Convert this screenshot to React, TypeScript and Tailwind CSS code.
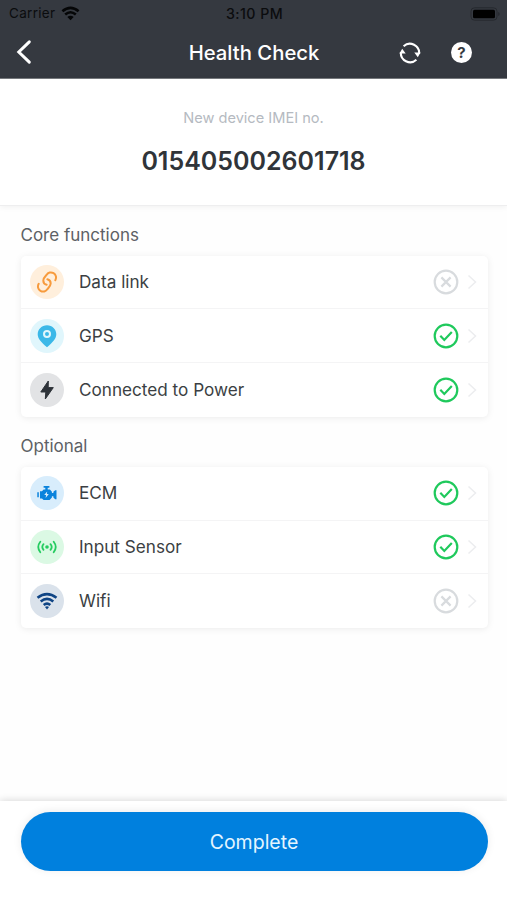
import { ReactNode } from "react";

type RowType = {
  label: string;
  icon: ReactNode;
  color: string;
  passed: boolean;
};

const LinkIcon = () => (
  <svg className="w-[22px] h-[22px]" viewBox="0 0 22 22" fill="none" stroke="#f79b3d" strokeWidth="2" strokeLinecap="round">
    <path d="M19.300 9.200A5 5 0 1 0 10.500 3.900C8.700 5.900 7.300 7.200 7.300 9.400 7.300 11.600 8.600 13.200 10.600 13.700" />
    <path d="M2.700 12.800A5 5 0 1 0 11.500 18.100C13.300 16.100 14.700 14.800 14.700 12.600 14.700 10.400 13.400 8.800 11.400 8.300" />
  </svg>
);

const PinIcon = () => (
  <svg className="w-[22px] h-[24px]" viewBox="0 0 22 24">
    <path
      fill="#3bb8e8"
      fillRule="evenodd"
      d="M11 1.200c5.300 0 9.300 4 9.300 9 0 4.300-3.500 7.900-9.300 13.100C5.200 18.100 1.700 14.500 1.700 10.200c0-5 4-9 9.300-9zM11 6.100a4 4 0 1 0 0 8 4 4 0 0 0 0-8zm0 2a2 2 0 1 1 0 4 2 2 0 0 1 0-4z"
    />
  </svg>
);

const BoltIcon = () => (
  <svg className="w-[16px] h-[20px]" viewBox="0 0 16 20">
    <path
      d="M9.300 1 1.800 12h5L6.300 19 14.300 7.600H9.200Z"
      fill="#2d3238"
      stroke="#2d3238"
      strokeWidth="1"
      strokeLinejoin="round"
    />
  </svg>
);

const EngineIcon = () => (
  <svg className="w-[20px] h-[16px]" viewBox="0 0 20 16">
    <path
      fill="#0a83dc"
      fillRule="evenodd"
      d="M6.600 1h5.800v1.800h-1.700v1.600h2.200l2 2.300V8h1.500V6.800L18.200 5.200h1.300v9h-1.300l-1.800-1.700v-1.200h-1.500v1.200L12.600 15H6.600L5 13.400H3V6.200h2L6.600 4.400h1.700V2.800H6.600ZM10.200 6.400 7.200 10h1.900l-.5 2.900L11.800 9H9.900ZM.3 7.200h1.500v5H.3Z"
    />
  </svg>
);

const SensorIcon = () => (
  <svg className="w-[20px] h-[16px]" viewBox="0 0 20 16" fill="none" stroke="#25cc60" strokeWidth="1.800" strokeLinecap="round">
    <path d="M3.300 2.800Q-.8 8 3.300 13.200M6.500 5.200Q4.100 8 6.500 10.800M13.500 5.200Q15.900 8 13.500 10.800M16.700 2.800Q20.800 8 16.700 13.200" />
    <circle cx="10" cy="8" r="1.800" fill="#25cc60" stroke="none" />
  </svg>
);

const WifiIcon = () => (
  <svg className="w-[22px] h-[18px]" viewBox="0 0 22 18" fill="none" stroke="#0f4484" strokeWidth="2.600">
    <path d="M1.500 5.800Q11-1.500 20.500 5.800M4.700 9.500Q11 4.400 17.300 9.500M7.700 13Q11 10.300 14.300 13" />
    <path d="M9 14.900Q11 13.700 13 14.900L11 17.500Z" fill="#0f4484" stroke="none" />
  </svg>
);

const coreFunctions: RowType[] = [
  { label: "Data link", icon: <LinkIcon />, color: "bg-[#ffefdc]", passed: false },
  { label: "GPS", icon: <PinIcon />, color: "bg-[#e0f6fc]", passed: true },
  { label: "Connected to Power", icon: <BoltIcon />, color: "bg-[#e2e3e5]", passed: true },
];

const optionalFunctions: RowType[] = [
  { label: "ECM", icon: <EngineIcon />, color: "bg-[#d8edfc]", passed: true },
  { label: "Input Sensor", icon: <SensorIcon />, color: "bg-[#dbf9e4]", passed: true },
  { label: "Wifi", icon: <WifiIcon />, color: "bg-[#dae2eb]", passed: false },
];

//Result of a single check
const Status = ({ passed }: { passed: boolean }) => (
  <svg
    className="w-[26px] h-[26px]"
    viewBox="0 0 26 26"
    fill="none"
    stroke={passed ? "#1fc95c" : "#d8dbde"}
    strokeWidth="2.200"
  >
    <circle cx="13" cy="13" r="11.300" />
    {passed ? <path d="m7.300 12.800 4 4.100 7.500-8" /> : <path d="m8.400 8.400 9.200 9.200m0-9.200-9.200 9.200" />}
  </svg>
);

const CheckList = ({ title, rows }: { title: string; rows: RowType[] }) => (
  <section>
    <h2 className="h-[49.700px] pt-[17.400px] leading-[24px] text-[17px] text-[#5d6165]">{title}</h2>
    <ul className="rounded-[5px] bg-white shadow-[0_1px_7px_rgba(0,0,0,0.08)]">
      {rows.map((row) => (
        <li
          key={row.label}
          className="flex items-center h-[53.800px] pl-[9.500px] pr-[10px] border-b border-[#f4f4f5] last:border-b-0"
        >
          <span className={`flex items-center justify-center w-[34px] h-[34px] rounded-full ${row.color}`}>
            {row.icon}
          </span>
          <span className="flex-1 ml-[15px] text-[17.150px] text-[#3b3f43]">{row.label}</span>
          <Status passed={row.passed} />
          <svg className="w-[10px] h-[16px] ml-[8px] mr-px" viewBox="0 0 10 16" fill="none" stroke="#ecedef" strokeWidth="1.500">
            <path d="m1.500 1.500 7 6.500-7 6.500" />
          </svg>
        </li>
      ))}
    </ul>
  </section>
);

const Header = () => (
  <header className="h-[79px] bg-[#353940] border-b border-[#777a7e]">
    <div className="grid grid-cols-[1fr_auto_1fr] items-center h-[27px] pl-[9px] pr-[7px] text-[13.500px] text-[#0b0c0e]">
      <div className="flex items-center gap-[6px]">
        <span className="tracking-[0.300px]">Carrier</span>
        <svg className="w-[19px] h-[15px]" viewBox="0 0 19 15" fill="none" stroke="#050607" strokeWidth="2.600">
          <path d="M1.400 5.300Q9.500-1.500 17.600 5.300M4.200 8.500Q9.500 4 14.800 8.500" />
          <path d="M9.500 14.300 6.300 11Q9.500 8.700 12.700 11Z" fill="#050607" stroke="none" />
        </svg>
      </div>
      <span className="text-center text-[14.200px] font-medium tracking-[0.450px]">3:10 PM</span>
      <svg className="w-[30px] h-[14px] justify-self-end" viewBox="0 0 30 14">
        <rect x="1" y=".8" width="26" height="12.400" rx="3.500" fill="none" stroke="#26292e" strokeWidth="1" />
        <rect x="3" y="2.700" width="22" height="8.600" rx="1.500" fill="#000" />
        <path d="M28.200 5v4q1.500-.6 1.500-2t-1.500-2Z" fill="#26292e" />
      </svg>
    </div>
    <div className="grid grid-cols-[1fr_auto_1fr] items-center h-[51px] pl-[16px] pr-[35px]">
      <button className="w-[16px]">
        <svg className="w-[16px] h-[26px] -mt-px" viewBox="0 0 16 26" fill="none" stroke="#fff" strokeWidth="3" strokeLinecap="round">
          <path d="M13.300 2.800 2.800 13l10.500 10.200" />
        </svg>
      </button>
      <h1 className="ml-[20px] pt-px text-[20.300px] font-medium text-white">Health Check</h1>
      <div className="flex justify-end items-center gap-[30px]">
        <svg className="w-[22px] h-[22px]" viewBox="0 0 22 22">
          <path
            d="M4.600 4.200A9.300 9.300 0 0 1 20.100 12M17.400 17.800A9.300 9.300 0 0 1 1.900 10"
            fill="none"
            stroke="#fff"
            strokeWidth="2.100"
          />
          <path d="M15.300 10.600h6.200l-2.700 4.700ZM6.700 11.400H.5l2.700-4.700Z" fill="#fff" />
        </svg>
        <span className="flex items-center justify-center w-[21px] h-[21px] rounded-full bg-white text-[15px] font-bold leading-none text-[#353940]">
          ?
        </span>
      </div>
    </div>
  </header>
);

const App = () => {
  return (
    <main className="flex flex-col w-[507px] h-[900px] overflow-hidden bg-[#fefefe] font-['Inter','Liberation_Sans',sans-serif]">
      <Header />
      <div className="h-[127px] pt-[28px] bg-white border-b border-[#eeeeef] text-center shadow-[0_1px_6px_rgba(0,0,0,0.06)]">
        <p className="leading-[22px] text-[14.600px] text-[#b5bac1]">New device IMEI no.</p>
        <p className="mt-[17px] leading-[30px] text-[25px] font-semibold text-[#303439]">015405002601718</p>
      </div>
      <div className="flex-1 pl-[20.500px] pr-[19px]">
        <CheckList title="Core functions" rows={coreFunctions} />
        <CheckList title="Optional" rows={optionalFunctions} />
      </div>
      <footer className="h-[99px] pl-[20.500px] pr-[19.500px] pt-[11px] bg-white shadow-[0_-1px_7px_rgba(0,0,0,0.14)]">
        <button className="block w-full h-[59px] pt-[2px] rounded-full bg-[#0080de] text-[19.500px] text-[#e4f5ff] shadow-[0_-1px_8px_rgba(0,0,0,0.08)]">
          Complete
        </button>
      </footer>
    </main>
  );
};

export default App;
